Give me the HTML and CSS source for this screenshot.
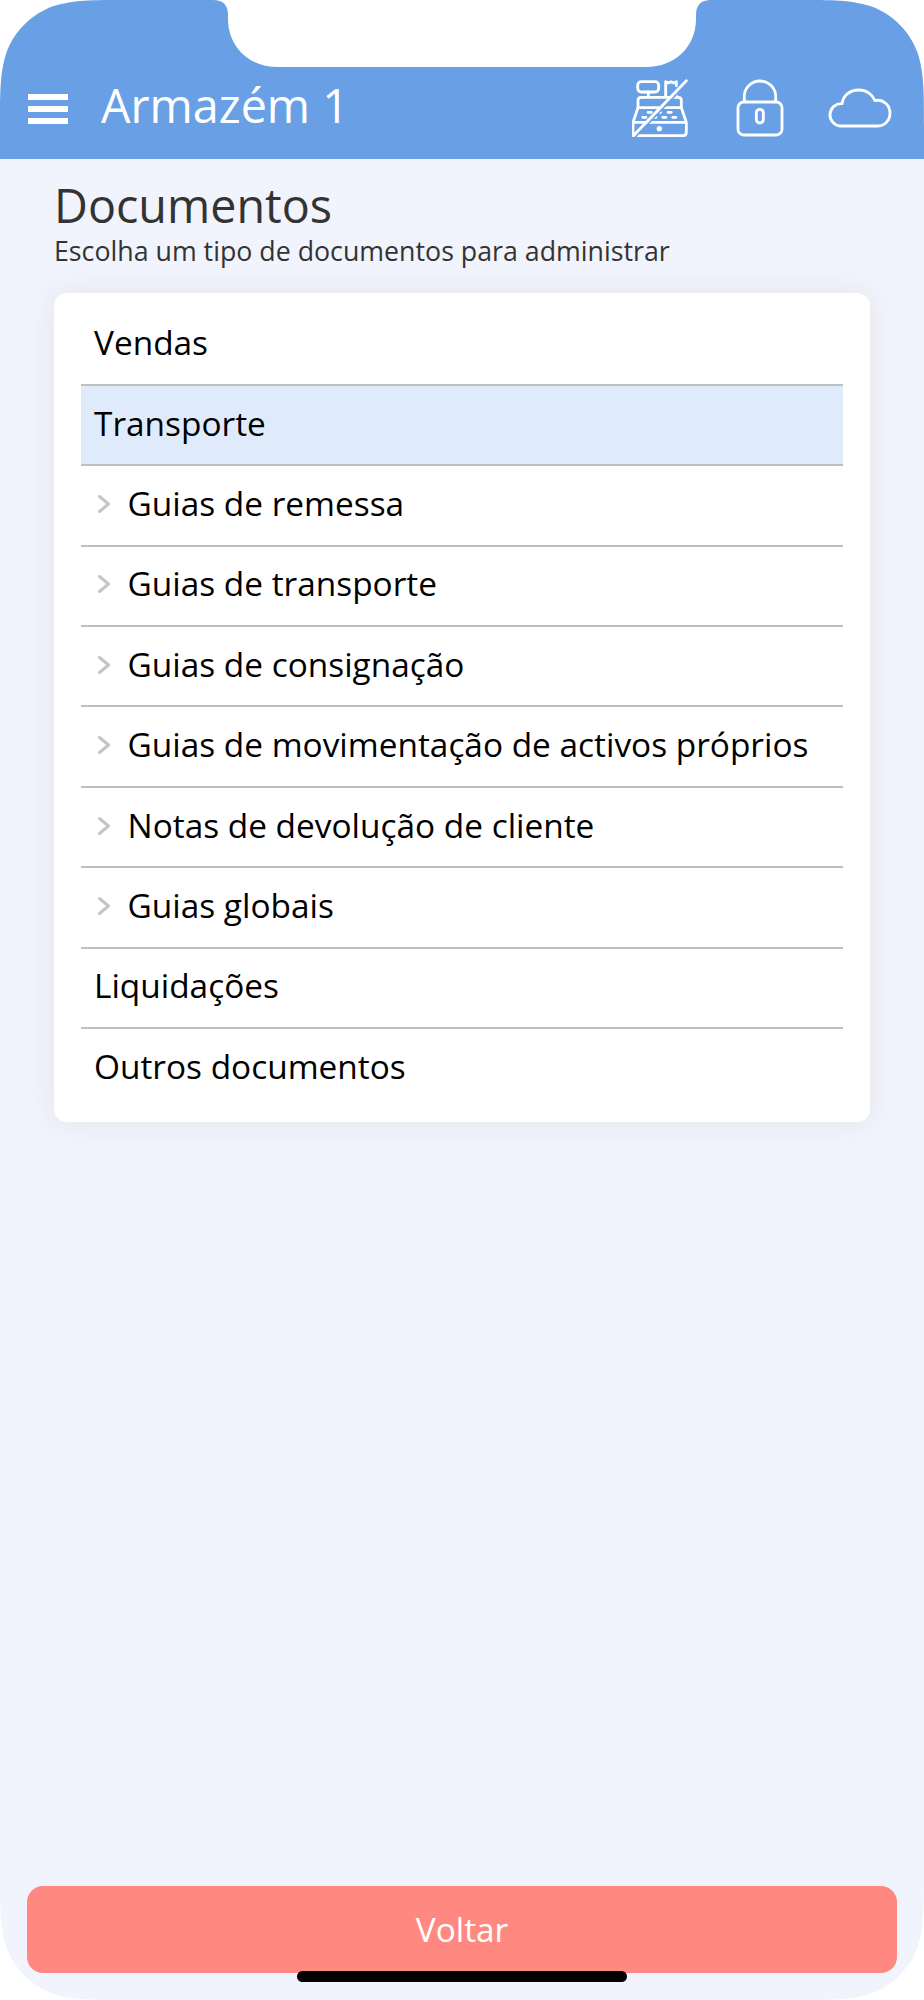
FILE: index.html
```
<!DOCTYPE html>
<html lang="pt">
<head>
    <meta charset="UTF-8">
    <meta name="viewport" content="width=device-width, initial-scale=1.0">
    <title>Armazém 1 - Documentos</title>
    <link rel="stylesheet" href="styles.css">
</head>
<body>

    <div class="phone">
        <header class="topbar">
            <button class="menu" aria-label="Menu">
                <span></span>
                <span></span>
                <span></span>
            </button>
            <div class="store">Armazém 1</div>
            <div class="icons">
                <!-- cash register, disabled -->
                <svg width="59" height="58" viewBox="36 28 177 174">
                    <rect x="53" y="36" width="63" height="31" rx="11"/>
                    <path d="M85 67V81M137 81V36L145 40L153 36L161 40L169 36V48M169 68V81"/>
                    <path d="M54 112V92Q54 83 64 83H174Q184 83 184 92V112"/>
                    <path d="M54 114H184L199 158V188Q199 198 189 198H49Q39 198 39 188V158ZM39 158H199"/>
                    <path class="keys" d="M84 128H94M112 128H122M144 128H154M68 143H78M98 143H108M128 143H138M158 143H168"/>
                    <circle class="dot" cx="118" cy="177" r="8"/>
                    <path class="gap" d="M46 202L204 38"/>
                    <path d="M40 198L199 33"/>
                </svg>
                <!-- lock -->
                <svg width="49" height="58" viewBox="45 28 147 174">
                    <rect x="54" y="97" width="132" height="99" rx="17"/>
                    <path d="M73 96V80A47 46 0 0 1 167 80V96"/>
                    <rect x="109" y="119" width="21" height="41" rx="10.5"/>
                </svg>
                <!-- cloud -->
                <svg width="64" height="40" viewBox="324 54 192 120">
                    <path d="M361 168A33 33 0 1 1 366 101C370 76 390 60 416 60C439 60 457 73 465 92C490 86 510 106 510 129C510 152 493 168 474 168Z"/>
                </svg>
            </div>
        </header>

        <main class="content">
            <h1>Documentos</h1>
            <p class="subtitle">Escolha um tipo de documentos para administrar</p>

            <ul class="doc-list">
                <li>Vendas</li>
                <li class="active">Transporte</li>
                <li class="sub"><svg width="12" height="18" viewBox="0 0 12 18"><path d="M1.5 1.5L10.5 9L1.5 16.5"/></svg>Guias de remessa</li>
                <li class="sub"><svg width="12" height="18" viewBox="0 0 12 18"><path d="M1.5 1.5L10.5 9L1.5 16.5"/></svg>Guias de transporte</li>
                <li class="sub"><svg width="12" height="18" viewBox="0 0 12 18"><path d="M1.5 1.5L10.5 9L1.5 16.5"/></svg>Guias de consignação</li>
                <li class="sub"><svg width="12" height="18" viewBox="0 0 12 18"><path d="M1.5 1.5L10.5 9L1.5 16.5"/></svg>Guias de movimentação de activos próprios</li>
                <li class="sub"><svg width="12" height="18" viewBox="0 0 12 18"><path d="M1.5 1.5L10.5 9L1.5 16.5"/></svg>Notas de devolução de cliente</li>
                <li class="sub"><svg width="12" height="18" viewBox="0 0 12 18"><path d="M1.5 1.5L10.5 9L1.5 16.5"/></svg>Guias globais</li>
                <li>Liquidações</li>
                <li>Outros documentos</li>
            </ul>
        </main>

        <footer class="bottom">
            <button class="back">Voltar</button>
        </footer>
        <div class="home-bar"></div>
    </div>

</body>
</html>
```
FILE: styles.css
```
* {
    box-sizing: border-box;
}

body {
    margin: 0;
    background: #fff;
    font-family: 'Open Sans', sans-serif;
    color: #000;
}

button {
    border: none;
    padding: 0;
    font-family: inherit;
    cursor: pointer;
}

/* rounded screen with the notch cut out of the top edge */
.phone {
    position: relative;
    display: flex;
    flex-direction: column;
    width: 924px;
    height: 2000px;
    background: #f1f4fd;
    clip-path: path('M0 128C0 91 0 73 6.3 53C14.2 31.3 31.3 14.2 53 6.3C73 0 91 0 128 0H213C223 0 228 5 228 15V20C228.5 46 248 67 278 67H646C676 67 695.5 46 696 20V15C696 5 701 0 711 0H796C833 0 851 0 871 6.3C892.7 14.2 909.8 31.3 917.7 53C924 73 924 91 924 128V1872C924 1909 924 1927 917.7 1947C909.8 1968.7 892.7 1985.8 871 1993.7C851 2000 833 2000 796 2000H128C91 2000 73 2000 53 1993.7C31.3 1985.8 14.2 1968.7 6.3 1947C0 1927 0 1909 0 1872Z');
}

.topbar {
    display: flex;
    align-items: center;
    height: 158.5px;
    padding: 58px 32px 0 28px;
    background: #69a0e5;
    color: #fff;
}

.menu {
    display: flex;
    flex-direction: column;
    gap: 6px;
    width: 40px;
    padding-top: 2px;
    background: none;
}

.menu span {
    height: 6px;
    background: #fff;
}

.store {
    flex: 1;
    margin-left: 33px;
    padding-bottom: 7px;
    font-size: 46.7px;
    line-height: 60px;
}

.icons {
    display: flex;
    align-items: center;
    gap: 44px;
}

.icons svg {
    fill: none;
    stroke: #fff;
    stroke-width: 8.5;
    stroke-linejoin: round;
    stroke-linecap: round;
}

.icons .keys {
    stroke-width: 8;
}

.icons .dot {
    fill: #fff;
    stroke: none;
}

.icons .gap {
    stroke: #69a0e5;
    stroke-width: 5;
}

.content {
    flex: 1;
    padding: 16px 54px 0;
}

h1 {
    margin: 0;
    font-size: 46.7px;
    font-weight: 400;
    line-height: 60px;
    color: #333;
}

.subtitle {
    margin: 0;
    font-size: 26.75px;
    line-height: 32px;
    color: #333;
}

.doc-list {
    list-style: none;
    margin: 26px 0 0;
    padding: 13px 27px;
    background: #fff;
    border-radius: 13px;
    box-shadow: 0 0 27px rgba(200, 190, 170, 0.27);
}

.doc-list li {
    display: flex;
    align-items: center;
    height: 80.4px;
    padding: 0 13px 5px;
    border-bottom: 2px solid #bfbfbf;
    font-size: 33.4px;
}

.doc-list li:last-child {
    border-bottom: none;
    padding-bottom: 7px;
}

.doc-list .active {
    background: #dfebfa;
}

.doc-list .sub {
    padding-left: 17px;
}

.doc-list svg {
    margin: 2px 17.5px 0 0;
    fill: none;
    stroke: #c4c4c4;
    stroke-width: 3;
    stroke-linecap: round;
    stroke-linejoin: round;
}

.bottom {
    padding: 0 27px 27px;
}

.back {
    display: block;
    width: 100%;
    height: 87px;
    padding-bottom: 2px;
    border-radius: 16px;
    background: #ff8980;
    color: #fff;
    font-size: 33.4px;
    font-weight: 400;
}

/* home indicator lies over the button */
.home-bar {
    position: absolute;
    left: 297px;
    bottom: 18px;
    width: 330px;
    height: 11px;
    border-radius: 6px;
    background: #000;
}
```
